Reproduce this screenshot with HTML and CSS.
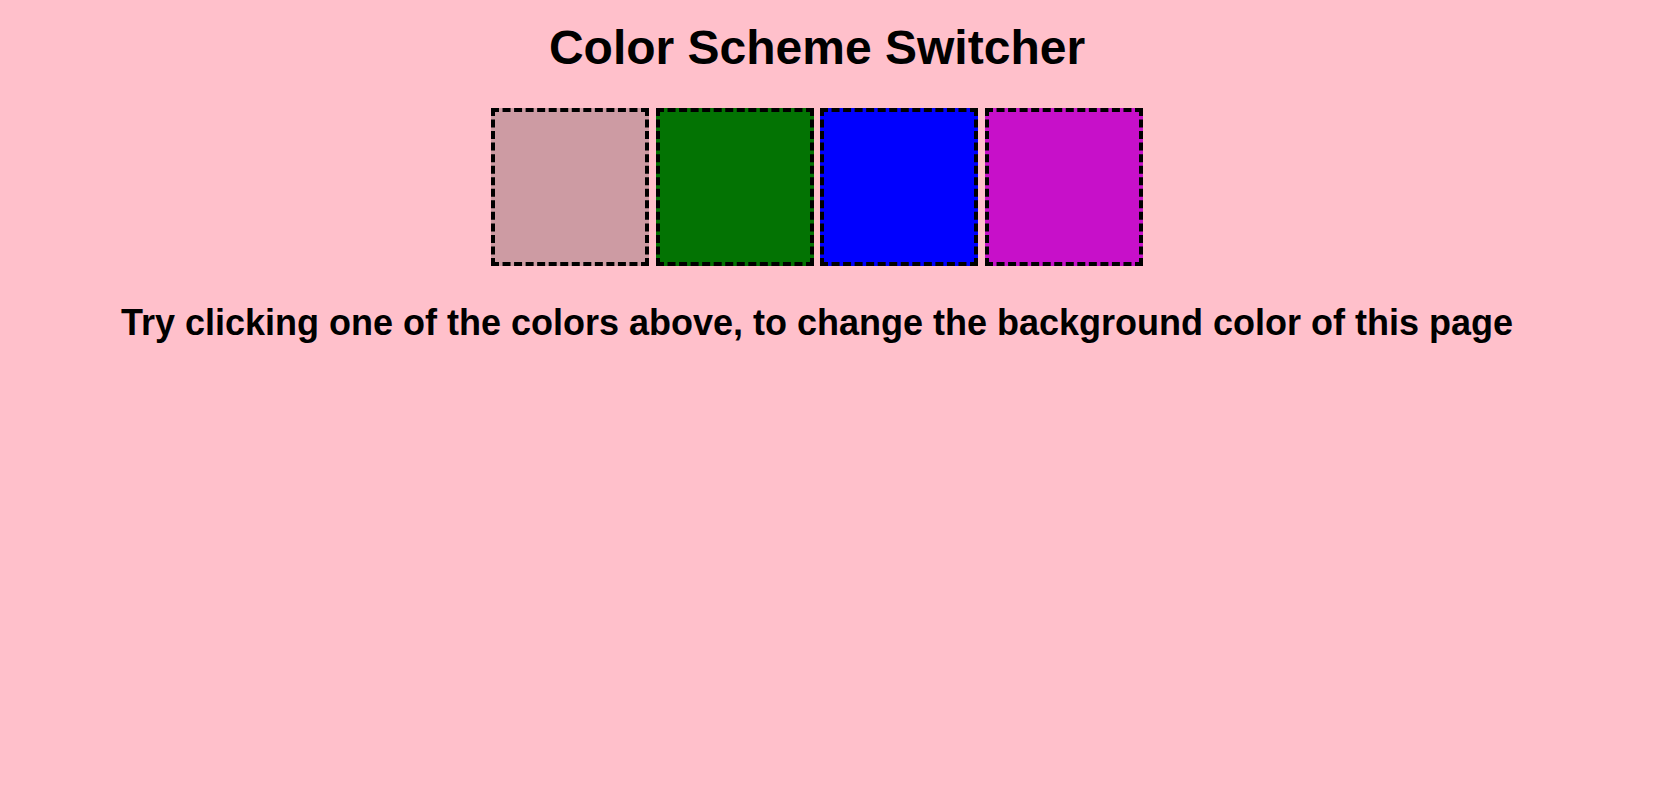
FILE: index.html
```html
<!DOCTYPE html>
<html lang="en">
<head>
<meta charset="utf-8">
<title>Color Scheme Switcher</title>
<link rel="stylesheet" href="styles.css">
</head>
<body>
<div class="page">
  <h1 class="title">Color Scheme Switcher</h1>
  <div class="swatches">
    <div class="swatch swatch-rose"></div>
    <div class="swatch swatch-green"></div>
    <div class="swatch swatch-blue"></div>
    <div class="swatch swatch-purple"></div>
  </div>
  <p class="hint">Try clicking one of the colors above, to change the background color of this page</p>
</div>
</body>
</html>
```

FILE: styles.css
```css
html, body {
  margin: 0;
  padding: 0;
}
body {
  background: #ffc0cb;
  font-family: "Liberation Sans", Arial, sans-serif;
  color: #000;
  min-height: 809px;
}
.page {
  padding: 20px 23px 0 0;
  display: flex;
  flex-direction: column;
  align-items: center;
}
.title {
  margin: 0;
  font-size: 48px;
  font-weight: bold;
  line-height: 55px;
}
.swatches {
  display: flex;
  gap: 6.5px;
  margin-top: 33px;
}
.swatch {
  width: 150px;
  height: 150px;
  border: 4px dashed #000;
}
.swatch-rose { background: #cd9ba3; }
.swatch-green { background: #037303; }
.swatch-blue { background: #0000ff; }
.swatch-purple { background: #c710c9; }
.hint {
  margin: 36px 0 0 0;
  font-size: 36px;
  font-weight: bold;
  line-height: 41px;
}
```
